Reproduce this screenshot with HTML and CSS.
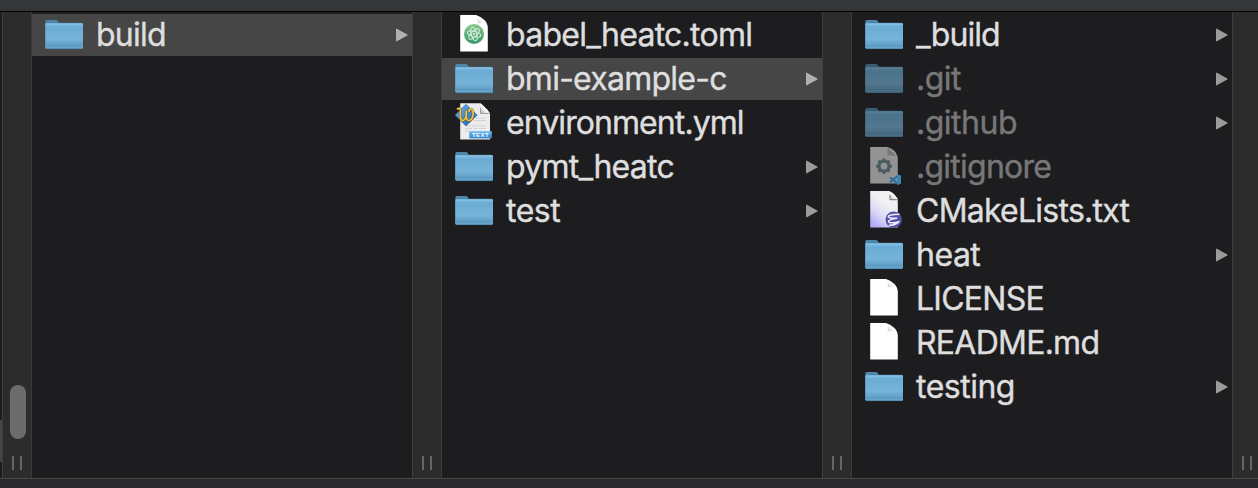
FILE: index.html
```html
<!DOCTYPE html>
<html lang="en">
<head>
<meta charset="utf-8">
<title>build</title>
<link rel="stylesheet" href="styles.css">
</head>
<body>
<svg class="defs" aria-hidden="true">
  <defs>
    <linearGradient id="blue" x1="0" y1="0" x2="0" y2="1"><stop offset="0" stop-color="#7fbce0"/><stop offset=".15" stop-color="#6aacd5"/><stop offset=".6" stop-color="#76b3d9"/><stop offset=".85" stop-color="#64a1c8"/><stop offset="1" stop-color="#67a5cb"/></linearGradient>
    <linearGradient id="green" x1="0" y1="0" x2="0" y2="1"><stop offset="0" stop-color="#8bc88c"/><stop offset="1" stop-color="#35956b"/></linearGradient>
    <linearGradient id="fold" x1="0" y1="1" x2="1" y2="0"><stop offset="0" stop-color="#b5b5b5"/><stop offset=".5" stop-color="#fff"/><stop offset="1" stop-color="#ddd"/></linearGradient>
    <linearGradient id="lilac" x1=".8" y1="0" x2=".2" y2="1"><stop offset=".35" stop-color="#f1f0f2"/><stop offset=".65" stop-color="#dedcf5"/><stop offset="1" stop-color="#b0a8fa"/></linearGradient>
    <linearGradient id="gem" x1="0" y1="0" x2="1" y2="1"><stop offset="0" stop-color="#6fb4ee"/><stop offset="1" stop-color="#1b62b4"/></linearGradient>
    <linearGradient id="tag" x1="0" y1="0" x2="0" y2="1"><stop offset="0" stop-color="#70bbf2"/><stop offset="1" stop-color="#2d83d0"/></linearGradient>
    <symbol id="folder" viewBox="0 0 44 42">
      <path d="M3.3 34V7.5Q3.3 6 4.8 6H14q1.3 0 1.8 1.2.6 1.5 2 1.5H39.5q1.5 0 1.5 1.5V34z" fill="#4d86a8"/>
      <rect x="3.3" y="9.3" width="37.7" height="25.6" rx="1.3" fill="url(#blue)"/>
      <path d="M3.8 10.2H40.5" stroke="#90c5e3" stroke-width=".8"/>
      <path d="M3.8 31.5H40.5" stroke="#5690b7" stroke-width=".7"/>
      <path d="M4 34.6H40.5" stroke="#4a83aa" stroke-width=".7"/>
    </symbol>
    <symbol id="page" viewBox="0 0 44 42">
      <path d="M8.2 1H24Q29 2.5 32 5.700 35 8 35.800 13V37.600H8.200z" fill="#fff"/>
      <path d="M25.800 2.500V9.300H32.200Q34.500 9.300 35.600 11.500 34 8 31 5.500 28.500 3.200 25.800 2.500z" fill="url(#fold)"/>
    </symbol>
    <symbol id="atom" viewBox="0 0 44 42">
      <use href="#page"/>
      <circle cx="22" cy="20" r="10" fill="url(#green)"/>
      <g fill="none" stroke="#d7f0df" stroke-width="1">
        <ellipse cx="22" cy="20" rx="2.7" ry="6.8" transform="rotate(-15 22 20)"/>
        <ellipse cx="22" cy="20" rx="2.7" ry="6.8" transform="rotate(45 22 20)"/>
        <ellipse cx="22" cy="20" rx="2.7" ry="6.8" transform="rotate(105 22 20)"/>
      </g>
      <circle cx="22" cy="20" r="1.1" fill="#e5f6ea"/>
    </symbol>
    <symbol id="wing" viewBox="0 0 44 42">
      <path d="M8.2 1.2H28.5L38 11.5V37.6H8.2z" fill="#ececec"/>
      <path d="M28.5 1.2V11.5H38q-2-4-4.600-5.800Q31 3 28.500 1.200z" fill="url(#fold)"/>
      <path d="M28.500 6V11.500H38" fill="none" stroke="#8b8b8b" stroke-width=".8"/>
      <path d="M24 16h9M22 18.500h12M14 24h5m1 0h6m1 0h6M13 26.500h7m2 0h4m1 0h7M13 29h5" stroke="#cfcfcf" stroke-width=".9"/>
      <path d="M3 13.200L14 2.300 25.200 13.200 14 24z" fill="url(#gem)" stroke="#245f9e" stroke-width=".6"/>
      <path d="M5 7.300Q8.300 5.200 8.600 8 7.500 18.800 10.800 18.700 14.800 17.800 14.300 8.500 13.200 18.700 17 18.500C21.500 18 22.500 8 19 7.200 16.800 6.800 16.300 9 17.500 10.200" fill="none" stroke="#6a5421" stroke-width="2.500"/>
      <path d="M5 7.300Q8.300 5.200 8.600 8 7.500 18.800 10.800 18.700 14.800 17.800 14.300 8.500 13.200 18.700 17 18.500C21.500 18 22.500 8 19 7.200 16.800 6.800 16.300 9 17.500 10.200" fill="none" stroke="#eec64a" stroke-width="1.700"/>
      <rect x="17.300" y="29.200" width="22.500" height="7.100" fill="url(#tag)"/>
      <text x="28.500" y="34.900" class="tag">TEXT</text>
    </symbol>
    <symbol id="gear" viewBox="0 0 44 42">
      <path d="M8.200 1H25.500L35.800 11V37.600H8.200z" fill="#939393"/>
      <path d="M25.500 1V9.500H34z" fill="#777"/><path d="M25.500 1Q33 3 35.800 11L34 9.500z" fill="#a0a0a0"/>
      <circle cx="22" cy="20.200" r="5" fill="none" stroke="#4c5b62" stroke-width="3.200"/>
      <path d="M22 12.400v3M22 25v3M14.200 20.200h3M26.800 20.200h3M16.500 14.700l2 2M25.500 23.700l2 2M16.500 25.700l2-2M25.500 16.700l2-2" stroke="#4c5b62" stroke-width="3"/>
      <path d="M36 29.700L28 36.200M36 37.700L28 31.200" stroke="#286b9b" stroke-width="2"/>
      <path d="M35.300 28L39 29.700V37.600L35.300 39.300z" fill="#3d87b8"/>
    </symbol>
    <symbol id="emacs" viewBox="0 0 44 42">
      <path d="M8.200 1H27.500L35.800 9V37.600H8.200z" fill="url(#lilac)"/>
      <path d="M28 1.500V9.500H35.800Q33 3.500 28 1.500z" fill="url(#fold)"/>
      <path d="M28 5V9.700H35.800" fill="none" stroke="#777" stroke-width="1"/>
      <circle cx="31.700" cy="29.600" r="8.200" fill="#5450a5"/>
      <path d="M37 24.300C30 24.300 26 25.500 26.300 26.700 26.500 28 31 28.300 34.700 28.300 30 28.800 26.300 30.300 26.500 31.600 26.700 33.300 33 33 37 31.600 34 34.500 30.500 35.300 27.300 35.300" fill="none" stroke="#eeedf9" stroke-width="1.500" stroke-linecap="round" stroke-linejoin="round"/>
    </symbol>
    <symbol id="arrow" viewBox="0 0 12 14">
      <path d="M.9.700L11.300 6.500Q11.900 7 11.300 7.500L.9 13.300Q0 13.700 0 12.700V1.300Q0 .3.900.700z" fill="currentColor"/>
    </symbol>
  </defs>
</svg>
<div class="window">
  <header class="topbar"></header>
  <main class="browser">
    <div class="edge"><i class="edge-thumb"></i></div>
    <div class="gutter"><i class="thumb"></i><i class="grip"></i></div>
    <ul class="column">
      <li class="row selected"><svg class="icon"><use href="#folder"/></svg><span class="name">build</span><svg class="arrow"><use href="#arrow"/></svg></li>
    </ul>
    <div class="gutter"><i class="grip"></i></div>
    <ul class="column">
      <li class="row"><svg class="icon"><use href="#atom"/></svg><span class="name">babel_heatc.toml</span></li>
      <li class="row selected"><svg class="icon"><use href="#folder"/></svg><span class="name">bmi-example-c</span><svg class="arrow"><use href="#arrow"/></svg></li>
      <li class="row"><svg class="icon"><use href="#wing"/></svg><span class="name tight">environment.yml</span></li>
      <li class="row"><svg class="icon"><use href="#folder"/></svg><span class="name">pymt_heatc</span><svg class="arrow"><use href="#arrow"/></svg></li>
      <li class="row"><svg class="icon"><use href="#folder"/></svg><span class="name loose">test</span><svg class="arrow"><use href="#arrow"/></svg></li>
    </ul>
    <div class="gutter"><i class="grip"></i></div>
    <ul class="column">
      <li class="row"><svg class="icon"><use href="#folder"/></svg><span class="name tight">_build</span><svg class="arrow"><use href="#arrow"/></svg></li>
      <li class="row hidden"><svg class="icon"><use href="#folder"/></svg><span class="name loose">.git</span><svg class="arrow"><use href="#arrow"/></svg></li>
      <li class="row hidden"><svg class="icon"><use href="#folder"/></svg><span class="name loose">.github</span><svg class="arrow"><use href="#arrow"/></svg></li>
      <li class="row hidden"><svg class="icon solid"><use href="#gear"/></svg><span class="name">.gitignore</span></li>
      <li class="row"><svg class="icon"><use href="#emacs"/></svg><span class="name">CMakeLists.txt</span></li>
      <li class="row"><svg class="icon"><use href="#folder"/></svg><span class="name loose">heat</span><svg class="arrow"><use href="#arrow"/></svg></li>
      <li class="row"><svg class="icon"><use href="#page"/></svg><span class="name">LICENSE</span></li>
      <li class="row"><svg class="icon"><use href="#page"/></svg><span class="name">README.md</span></li>
      <li class="row"><svg class="icon"><use href="#folder"/></svg><span class="name loose">testing</span><svg class="arrow"><use href="#arrow"/></svg></li>
    </ul>
    <div class="gutter"><i class="grip"></i></div>
  </main>
  <footer class="bottombar"></footer>
</div>
</body>
</html>
```

FILE: styles.css
```css
* { box-sizing: border-box; }
body { margin: 0; background: #1d1d1f; overflow: hidden; }
.defs { display: block; width: 0; height: 0; }
.window {
  display: flex;
  flex-direction: column;
  width: 1258px;
  height: 488px;
  font-family: Inter, "Liberation Sans", sans-serif;
}
.topbar { height: 12px; background: #353638; border-bottom: 1px solid #030303; flex: none; }
.browser { flex: 1; display: flex; min-height: 0; overflow: hidden; }
.bottombar { height: 10px; background: #2a2a2c; border-top: 1px solid #474747; flex: none; }
.edge { width: 2px; flex: none; background: #1d1d1f; padding-top: 408px; }
.edge-thumb { display: block; height: 42px; background: #454545; }
.gutter {
  width: 30px;
  flex: none;
  display: flex;
  flex-direction: column;
  justify-content: flex-end;
  padding: 0 0 8px 9px;
  gap: 17px;
  background: #2c2c2c;
  border-left: 1px solid #3f3f3f;
  border-right: 1px solid #3a3a3a;
}
.thumb { display: block; width: 16px; height: 54px; margin-left: -2px; border-radius: 8px; background: #6c6c6c; }
.grip { display: block; width: 10px; height: 14px; border: solid #666; border-width: 0 2px; }
.column {
  width: 380px;
  flex: none;
  margin: 0;
  padding: 2px 0 0;
  list-style: none;
  display: flex;
  flex-direction: column;
  gap: 2px;
  background: #1d1d1f;
}
.row { display: flex; align-items: center; height: 42px; padding: 0 4px 0 10px; color: #dededf; }
.selected { background: #464646; }
.icon { width: 44px; height: 42px; flex: none; margin-right: 10px; }
.name {
  flex: 1;
  font-size: 32px;
  line-height: 42px;
  letter-spacing: -0.75px;
  white-space: nowrap;
  -webkit-text-stroke: 0.4px currentColor;
}
.tight { letter-spacing: -0.92px; }
.loose { letter-spacing: -0.5px; }
.arrow { width: 12px; height: 14px; flex: none; margin-bottom: 1px; color: #9b9b9b; }
.selected .arrow { color: #b0b0b0; }
.hidden { color: #777778; }
.hidden .icon { opacity: .6; }
.hidden .solid { opacity: 1; }
.hidden .arrow { color: #9b9b9b; }
.tag { font: 700 6px "Liberation Sans", sans-serif; fill: #fff; text-anchor: middle; letter-spacing: .4px; }
```
